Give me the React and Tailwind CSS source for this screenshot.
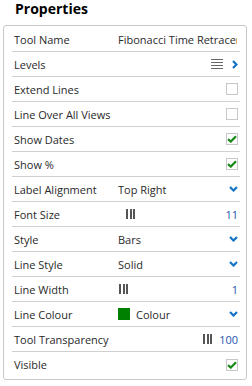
import React from 'react';

const Checkbox = ({ checked }) => (
    <span className="w-[12px] h-[12px] border border-[#c8c8c8] bg-white flex items-center justify-center">
        {checked && (
            <svg width="10" height="8" viewBox="0 0 10 8">
                <path d="M1 4.2 L3.8 6.6 L9 1.2" fill="none" stroke="#1a8a1a" strokeWidth="2.2" />
            </svg>
        )}
    </span>
);

const Chevron = () => (
    <svg width="9" height="6" viewBox="0 0 9 6">
        <path d="M1 1 L4.5 4.5 L8 1" fill="none" stroke="#1473c6" strokeWidth="2.2" />
    </svg>
);

const Bars = () => (
    <span className="flex gap-[1.5px] h-[10px]">
        <span className="w-[2px] h-full bg-[#555]" />
        <span className="w-[2px] h-full bg-[#555]" />
        <span className="w-[2px] h-full bg-[#555]" />
    </span>
);

const Row = ({ label, value, right, last }) => (
    <div className={`h-[25px] flex items-center pl-[2px] pr-[2px] ${last ? '' : 'border-b border-[#d0d0d0]'}`}>
        <span className="w-[104px] shrink-0 whitespace-nowrap">{label}</span>
        <span className="flex-1 flex items-center whitespace-nowrap overflow-hidden">{value}</span>
        {right && <span className="flex items-center justify-end shrink-0">{right}</span>}
    </div>
);

export default function App() {
    return (
        <div className="w-[252px] h-[386px] bg-white text-[#2a2a2a] text-[11px] leading-[15px]" style={{ fontFamily: '"Open Sans", "Liberation Sans", sans-serif' }}>
            <div className="pl-[15px] h-[25px] text-[14px] leading-[17px] font-bold text-black">Properties</div>
            <div className="ml-[3px] w-[244px] h-[355px] border border-[#c8c8c8] rounded-[3px] pl-[8px] pr-[6px] pt-[1px]">
                <Row label="Tool Name" value={<span className="overflow-hidden w-[119px]">Fibonacci Time Retracement</span>} />
                <Row
                    label="Levels"
                    right={
                        <span className="flex items-center gap-[9px]">
                            <svg width="12" height="10" viewBox="0 0 12 10">
                                <path d="M0 0.5 H12 M0 3.5 H12 M0 6.5 H12 M0 9.5 H12" stroke="#666" strokeWidth="1" />
                            </svg>
                            <svg width="6" height="9" viewBox="0 0 6 9">
                                <path d="M1 1 L4.5 4.5 L1 8" fill="none" stroke="#1473c6" strokeWidth="2.2" />
                            </svg>
                        </span>
                    }
                />
                <Row label="Extend Lines" right={<Checkbox />} />
                <Row label="Line Over All Views" right={<Checkbox />} />
                <Row label="Show Dates" right={<Checkbox checked />} />
                <Row label="Show %" right={<Checkbox checked />} />
                <Row label="Label Alignment" value="Top Right" right={<Chevron />} />
                <Row label="Font Size" value={<span className="ml-[8px]"><Bars /></span>} right={<span className="text-[#1d55b3]">11</span>} />
                <Row label="Style" value="Bars" right={<Chevron />} />
                <Row label="Line Style" value="Solid" right={<Chevron />} />
                <Row label="Line Width" value={<span className="ml-[1px]"><Bars /></span>} right={<span className="text-[#1d55b3]">1</span>} />
                <Row
                    label="Line Colour"
                    value={
                        <span className="flex items-center gap-[6px]">
                            <span className="w-[12px] h-[12px] bg-[#008000]" />
                            <span>Colour</span>
                        </span>
                    }
                    right={<Chevron />}
                />
                <Row
                    label="Tool Transparency"
                    right={
                        <span className="flex items-center gap-[7px]">
                            <Bars />
                            <span className="text-[#1d55b3]">100</span>
                        </span>
                    }
                />
                <Row label="Visible" right={<Checkbox checked />} last />
            </div>
        </div>
    );
}
